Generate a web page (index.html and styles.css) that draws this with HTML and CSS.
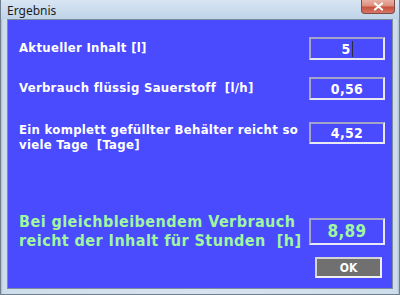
FILE: index.html
```html
<!DOCTYPE html>
<html lang="de">
<head>
<meta charset="utf-8">
<title>Ergebnis</title>
<link rel="stylesheet" href="styles.css">
</head>
<body>
<div class="window">
  <div class="titlebar">
    <span class="title">Ergebnis</span>
    <button class="close" aria-label="Schließen">
      <svg width="11" height="9" viewBox="0 0 11 9"><path d="M2 1.5 L9 7.5 M9 1.5 L2 7.5" stroke="#fff" stroke-width="2.2" stroke-linecap="round" fill="none"/></svg>
    </button>
  </div>
  <div class="client">
    <div class="row row1">
      <span class="label">Aktueller Inhalt [l]</span>
      <div class="field">5<span class="caret"></span></div>
    </div>
    <div class="row row2">
      <span class="label">Verbrauch flüssig Sauerstoff&nbsp; [l/h]</span>
      <div class="field">0,56</div>
    </div>
    <div class="row row3">
      <span class="label">Ein komplett gefüllter Behälter reicht so<br>viele Tage&nbsp; [Tage]</span>
      <div class="field">4,52</div>
    </div>
    <div class="row row4">
      <span class="label green">Bei gleichbleibendem Verbrauch<br>reicht der Inhalt für Stunden&nbsp; [h]</span>
      <div class="field big">8,89</div>
    </div>
    <div class="actions">
      <button class="ok">OK</button>
    </div>
  </div>
</div>
</body>
</html>
```
FILE: styles.css
```css
html, body {
  margin: 0;
  padding: 0;
  background: #ffffff;
}
.window {
  width: 400px;
  height: 295px;
  box-sizing: border-box;
  display: flex;
  flex-direction: column;
  overflow: hidden;
  background: linear-gradient(90deg, #a9bdd2 0px, #cfdcea 2px, #d6e2ef 50%, #cfdcea calc(100% - 2px), #a9bdd2 100%);
  border-left: 1px solid #6f7f90;
  border-right: 1px solid #6f7f90;
  border-bottom: 1px solid #6f7f90;
}
.titlebar {
  height: 19px;
  flex: none;
  display: flex;
  align-items: flex-start;
  justify-content: space-between;
  background: linear-gradient(180deg, #d8e5f2 0%, #c9dbed 60%, #bfd3e8 100%);
  padding-left: 6px;
}
.title {
  font-family: "Noto Sans", "Open Sans", sans-serif;
  font-size: 12px;
  line-height: 16px;
  margin-top: 3px;
  color: #1b1b1b;
}
.close {
  width: 34px;
  height: 14px;
  margin-right: 4px;
  padding: 0;
  border: 1px solid #7d4b45;
  border-top: none;
  border-radius: 0 0 4px 4px;
  background: linear-gradient(180deg, #e9b0a2 0%, #dc8f7e 45%, #c8503b 55%, #d6786a 100%);
  display: flex;
  align-items: center;
  justify-content: center;
}
.client {
  flex: 1;
  min-height: 0;
  margin: 0 6px 5px 6px;
  border: 1px solid #7e8d9e;
  background: #4a4aff;
  padding: 17px 7px 0 11px;
  font-family: "DejaVu Sans Condensed", "DejaVu Sans", sans-serif;
  font-weight: bold;
  color: #ffffff;
}
.row {
  display: flex;
  justify-content: space-between;
  align-items: center;
}
.label {
  font-size: 13px;
  line-height: 15px;
  letter-spacing: 0.3px;
  white-space: nowrap;
}
.field {
  width: 76px;
  height: 23px;
  flex: none;
  box-sizing: border-box;
  border: 2px solid;
  border-color: #a4a4c8 #e8e8f4 #e8e8f4 #a4a4c8;
  display: flex;
  align-items: center;
  justify-content: center;
  font-size: 14px;
  letter-spacing: 0.3px;
  color: #ffffff;
}
.caret {
  display: inline-block;
  width: 1px;
  height: 16px;
  margin-left: 1px;
  background: #2a2a40;
}
.row1 .label { margin-top: -3px; }
.row2 { margin-top: 17px; }
.row2 .label { margin-top: -3px; }
.row3 {
  margin-top: 22px;
  align-items: flex-start;
}
.row3 .field { height: 22px; }
.row4 { margin-top: 60px; }
.green {
  font-size: 16px;
  line-height: 19px;
  letter-spacing: 0.45px;
  color: #a0f7a0;
}
.field.big {
  height: 27px;
  font-size: 17px;
  color: #a0f7a0;
}
.actions {
  display: flex;
  justify-content: flex-end;
  margin-top: 7px;
  padding-right: 3px;
}
.ok {
  width: 67px;
  height: 21px;
  box-sizing: border-box;
  border: 2px solid;
  border-color: #d4d4d4 #f0f0f0 #f0f0f0 #d4d4d4;
  background: #707070;
  color: #ffffff;
  font-family: "DejaVu Sans Condensed", "DejaVu Sans", sans-serif;
  font-weight: bold;
  font-size: 12px;
  padding: 0;
}
```
